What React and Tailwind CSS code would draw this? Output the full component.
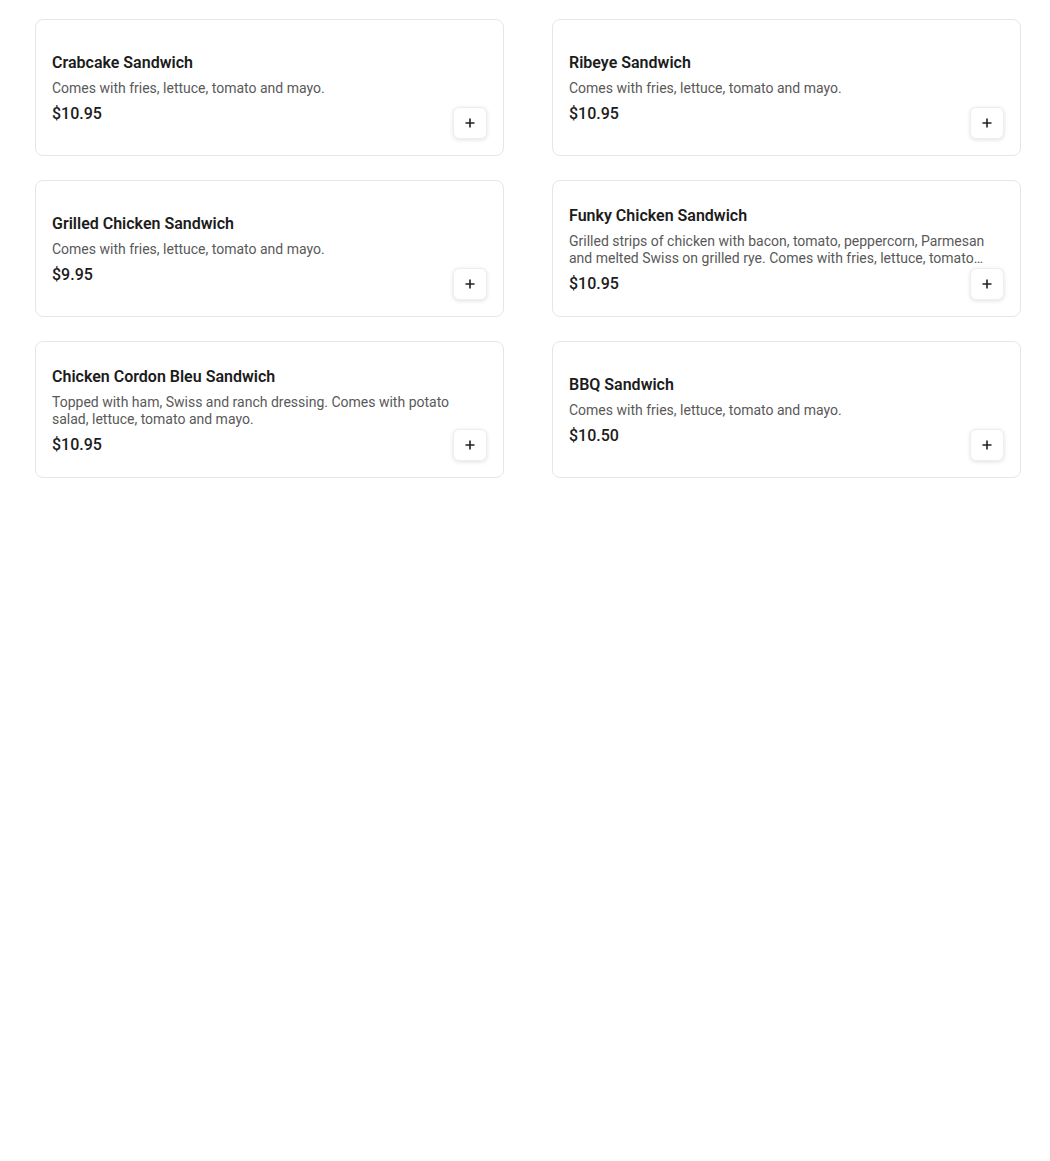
import React from "react";

const items = [
  { name: "Crabcake Sandwich", desc: "Comes with fries, lettuce, tomato and mayo.", price: "$10.95" },
  { name: "Ribeye Sandwich", desc: "Comes with fries, lettuce, tomato and mayo.", price: "$10.95" },
  { name: "Grilled Chicken Sandwich", desc: "Comes with fries, lettuce, tomato and mayo.", price: "$9.95" },
  {
    name: "Funky Chicken Sandwich",
    desc: "Grilled strips of chicken with bacon, tomato, peppercorn, Parmesan and melted Swiss on grilled rye. Comes with fries, lettuce, tomato and mayo.",
    price: "$10.95",
  },
  {
    name: "Chicken Cordon Bleu Sandwich",
    desc: "Topped with ham, Swiss and ranch dressing. Comes with potato salad, lettuce, tomato and mayo.",
    price: "$10.95",
  },
  { name: "BBQ Sandwich", desc: "Comes with fries, lettuce, tomato and mayo.", price: "$10.50" },
];

const PlusIcon = () => (
  <svg width="12" height="12" viewBox="0 0 12 12" fill="none">
    <path d="M6 1.5v9M1.5 6h9" stroke="#222" strokeWidth="1.6" />
  </svg>
);

const MenuCard = ({ item }) => (
  <div className="relative h-[137px] rounded-lg border border-[#e6e6e6] bg-white px-4 pt-[2px] flex flex-col justify-center">
    <h3 className="text-base leading-5 font-semibold text-[#1c1c1c]">{item.name}</h3>
    <p className="mt-[7px] mr-3 text-sm leading-[17px] text-[#595959] line-clamp-2">{item.desc}</p>
    <p className="mt-[7px] text-base leading-5 font-medium text-[#1c1c1c]">{item.price}</p>
    <button className="absolute right-4 bottom-4 w-[34px] h-8 rounded-md bg-white border border-[#eeeeee] shadow-[0_1px_4px_rgba(0,0,0,0.12)] flex items-center justify-center">
      <PlusIcon />
    </button>
  </div>
);

const App = () => {
  return (
    <div className="min-h-[1161px] bg-white" style={{ fontFamily: "Roboto, 'Liberation Sans', sans-serif" }}>
      <div className="pl-[35px] pr-[29px] pt-[19px] grid grid-cols-2 gap-x-[48px] gap-y-[24px]">
        {items.map((item) => (
          <MenuCard key={item.name} item={item} />
        ))}
      </div>
    </div>
  );
};

export default App;
